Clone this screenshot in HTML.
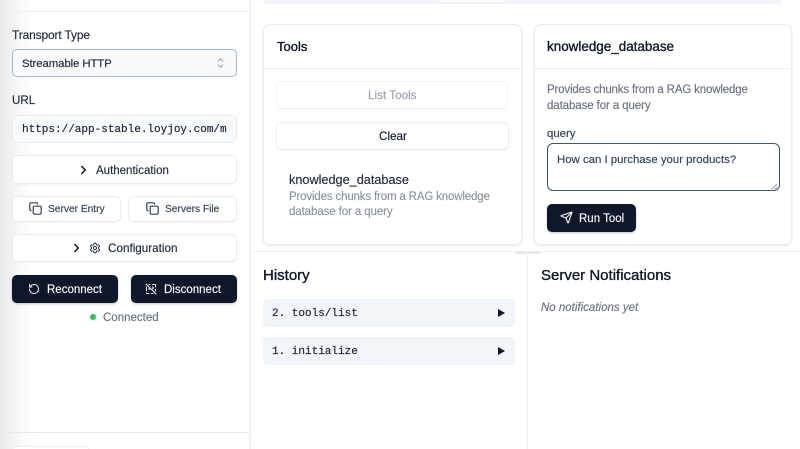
<!DOCTYPE html>
<html><head><meta charset="utf-8"><style>
*{box-sizing:border-box}
html,body{margin:0;padding:0;width:800px;height:449px;overflow:hidden;background:#fff}
body{font-family:"Liberation Sans",sans-serif;color:#0f172a;position:relative}
#w{position:absolute;left:0;top:0;width:800px;height:449px;filter:blur(.35px)}
.a{position:absolute;white-space:nowrap}
.t{position:absolute;white-space:nowrap;line-height:16px;font-size:12px;margin-top:1px;-webkit-text-stroke:.15px currentColor}
.b{position:absolute;border:1px solid #e8ecf3;border-radius:5px;background:#fff;box-shadow:0 1px 1px rgba(15,23,42,.03)}
.d{position:absolute;background:#0f172a;border-radius:5px;box-shadow:0 1px 2px rgba(15,23,42,.25)}
.m{font-family:"Liberation Mono",monospace;font-size:11px;-webkit-text-stroke:.2px currentColor}
svg{position:absolute;fill:none;stroke:currentColor;stroke-width:2;stroke-linecap:round;stroke-linejoin:round}
.card{position:absolute;background:#fff;border:1px solid #e8ecf3;border-radius:7px;box-shadow:0 1px 2px rgba(15,23,42,.1)}
</style></head><body><div id="w">
<div class="a" style="left:0;top:0;width:34px;height:449px;background:linear-gradient(90deg,#e8e8e8,#f7f7f7 50%,#fff)"></div>
<div class="a" style="left:249px;top:0;width:1.5px;height:449px;background:#eef1f6"></div>
<div class="a" style="left:0;top:11px;width:249px;height:1px;background:#eef1f6"></div>
<div class="a" style="left:0;top:432px;width:249px;height:1px;background:#e6ebf2"></div>
<div class="b" style="left:12px;top:446px;width:78px;height:10px"></div>

<div class="t" style="left:12px;top:26px;font-size:12px;letter-spacing:-.15px;color:#1e293b">Transport Type</div>
<div class="a" style="left:12px;top:49px;width:225px;height:28px;border:1.5px solid #a5b0f8;border-radius:5px;background:#f8fafc"></div>
<div class="t" style="left:22px;top:55px;font-size:11.4px;color:#1e293b;letter-spacing:-.1px">Streamable HTTP</div>
<svg style="left:216px;top:57px;color:#a0a7b3;stroke-width:1.1" width="9" height="12" viewBox="0 0 9 12"><path d="M2.2 4l2.3-2.3L6.8 4M2.2 8l2.3 2.3L6.8 8"/></svg>

<div class="t" style="left:12px;top:92px;font-size:11.6px;color:#1e293b">URL</div>
<div class="a" style="left:12px;top:115px;width:225px;height:28px;border:1px solid #e8ecf3;border-radius:5px;background:#f8fafc"></div>
<div class="t m" style="left:22px;top:121px;color:#1e293b">https://app-stable.loyjoy.com/m</div>

<div class="b" style="left:12px;top:155px;width:225px;height:29px"></div>
<svg style="left:79px;top:165px;color:#0f172a;stroke-width:1.5" width="9" height="10" viewBox="0 0 9 10"><path d="M2.8 1.5l3.5 3.5-3.5 3.5"/></svg>
<div class="t" style="left:96px;top:162px;font-size:11.5px;color:#1e293b">Authentication</div>

<div class="b" style="left:12px;top:196px;width:108.500px;height:25.500px"></div>
<svg style="left:29px;top:202px;color:#334155;stroke-width:1.2" width="13" height="13" viewBox="0 0 13 13"><rect x="4.2" y="4.2" width="8" height="8" rx="1.2"/><path d="M2 8.6C1.3 8.6.8 8 .8 7.400V2C.8 1.300 1.300.8 2 .8h5.400c.6 0 1.200.5 1.200 1.200"/></svg>
<div class="t" style="left:48px;top:201px;font-size:10.2px;color:#334155">Server Entry</div>
<div class="b" style="left:127.500px;top:196px;width:109.500px;height:25.500px"></div>
<svg style="left:146px;top:202px;color:#334155;stroke-width:1.2" width="13" height="13" viewBox="0 0 13 13"><rect x="4.2" y="4.2" width="8" height="8" rx="1.2"/><path d="M2 8.6C1.3 8.6.8 8 .8 7.400V2C.8 1.300 1.300.8 2 .8h5.400c.6 0 1.200.5 1.200 1.200"/></svg>
<div class="t" style="left:165px;top:201px;font-size:10.2px;color:#334155">Servers File</div>

<div class="b" style="left:12px;top:234px;width:225px;height:28px"></div>
<svg style="left:72px;top:243px;color:#0f172a;stroke-width:1.5" width="9" height="10" viewBox="0 0 9 10"><path d="M2.8 1.5l3.5 3.5-3.5 3.5"/></svg>
<svg style="left:89px;top:242px;color:#1e293b;stroke-width:1.8" width="12" height="12" viewBox="0 0 24 24"><path d="M12.220 2h-.44a2 2 0 0 0-2 2v.18a2 2 0 0 1-1 1.730l-.43.25a2 2 0 0 1-2 0l-.15-.08a2 2 0 0 0-2.730.73l-.22.38a2 2 0 0 0 .73 2.730l.15.1a2 2 0 0 1 1 1.720v.51a2 2 0 0 1-1 1.740l-.15.09a2 2 0 0 0-.73 2.730l.22.38a2 2 0 0 0 2.730.73l.15-.08a2 2 0 0 1 2 0l.43.25a2 2 0 0 1 1 1.730V20a2 2 0 0 0 2 2h.44a2 2 0 0 0 2-2v-.18a2 2 0 0 1 1-1.730l.43-.25a2 2 0 0 1 2 0l.15.08a2 2 0 0 0 2.730-.73l.22-.39a2 2 0 0 0-.73-2.730l-.15-.08a2 2 0 0 1-1-1.740v-.5a2 2 0 0 1 1-1.740l.15-.09a2 2 0 0 0 .73-2.730l-.22-.38a2 2 0 0 0-2.730-.73l-.15.08a2 2 0 0 1-2 0l-.43-.25a2 2 0 0 1-1-1.730V4a2 2 0 0 0-2-2z"/><circle cx="12" cy="12" r="3"/></svg>
<div class="t" style="left:108px;top:240px;font-size:11.7px;color:#1e293b">Configuration</div>

<div class="d" style="left:12px;top:275px;width:106px;height:28px"></div>
<svg style="left:28px;top:282.500px;color:#f8fafc;stroke-width:2" width="12" height="12" viewBox="0 0 24 24"><path d="M3 12a9 9 0 1 0 9-9 9.750 9.750 0 0 0-6.740 2.740L3 8"/><path d="M3 3v5h5"/></svg>
<div class="t" style="left:47px;top:281px;font-size:11.5px;color:#f8fafc">Reconnect</div>
<div class="d" style="left:130.500px;top:275px;width:106.500px;height:28px"></div>
<svg style="left:145px;top:282.500px;color:#f8fafc;stroke-width:2" width="12" height="12" viewBox="0 0 24 24"><path d="M2 2l20 20M8 3h2M15 3h5a1 1 0 0 1 1 1v4M21 13v3M3 8v8M3 20v0a1 1 0 0 0 1 1h4M13 21h3M7 12h3M15 8l2 2-2 2"/></svg>
<div class="t" style="left:164px;top:281px;font-size:11.5px;color:#f8fafc">Disconnect</div>

<div class="a" style="left:90px;top:314px;width:6px;height:6px;border-radius:50%;background:#22c55e"></div>
<div class="t" style="left:103px;top:309px;font-size:11.5px;color:#6b7280">Connected</div>

<div class="a" style="left:263px;top:0;width:519px;height:4px;background:#f1f5f9;border-radius:0 0 4px 4px"></div>
<div class="a" style="left:440px;top:0;width:64px;height:1.500px;background:#fff;border-radius:0 0 2px 2px"></div>

<div class="card" style="left:263px;top:24px;width:258.500px;height:221px"></div>
<div class="a" style="left:264px;top:68px;width:256px;height:1px;background:#eceff5"></div>
<div class="t" style="left:277px;top:38px;font-size:13px;color:#0f172a;-webkit-text-stroke:.35px #0f172a">Tools</div>
<div class="b" style="left:276px;top:81px;width:232px;height:28px;border-color:#f1f3f7;box-shadow:none"></div>
<div class="t" style="left:368px;top:87px;font-size:11.7px;color:#9ca3af">List Tools</div>
<div class="b" style="left:276px;top:122px;width:232.500px;height:28px"></div>
<div class="t" style="left:379px;top:128px;font-size:11.7px;color:#0f172a">Clear</div>
<div class="t" style="left:289px;top:171px;font-size:12.7px;color:#1e293b">knowledge_database</div>
<div class="t" style="left:289px;top:188px;font-size:11.5px;color:#8b93a1;letter-spacing:-.16px">Provides chunks from a RAG knowledge</div>
<div class="t" style="left:289px;top:203px;font-size:11.5px;color:#8b93a1;letter-spacing:-.1px">database for a query</div>

<div class="card" style="left:534px;top:24px;width:258px;height:221px"></div>
<div class="a" style="left:535px;top:68px;width:256px;height:1px;background:#eceff5"></div>
<div class="t" style="left:547px;top:38px;font-size:13.45px;color:#0f172a;-webkit-text-stroke:.35px #0f172a">knowledge_database</div>
<div class="t" style="left:547px;top:81px;font-size:11.5px;color:#6b7280;letter-spacing:-.16px">Provides chunks from a RAG knowledge</div>
<div class="t" style="left:547px;top:97px;font-size:11.5px;color:#6b7280;letter-spacing:-.1px">database for a query</div>
<div class="t" style="left:547px;top:125px;font-size:11.4px;color:#334155">query</div>
<div class="a" style="left:546.500px;top:143px;width:233px;height:48px;border:1.500px solid #475569;border-radius:6px;background:#fff"></div>
<div class="t" style="left:557px;top:151px;font-size:11.4px;color:#334155">How can I purchase your products?</div>
<svg style="left:771px;top:183px;color:#94a3b8;stroke-width:1" width="7" height="7" viewBox="0 0 7 7"><path d="M1 6l5-5M4 6l2-2"/></svg>
<div class="d" style="left:547px;top:204px;width:89px;height:28px"></div>
<svg style="left:559.500px;top:211px;color:#f8fafc;stroke-width:2" width="13" height="13" viewBox="0 0 24 24"><path d="M14.536 21.686a.5.5 0 0 0 .937-.024l6.500-19a.496.496 0 0 0-.635-.635l-19 6.500a.5.5 0 0 0-.024.937l7.930 3.180a2 2 0 0 1 1.112 1.110z"/><path d="M21.854 2.147 10.914 13.086"/></svg>
<div class="t" style="left:579px;top:210px;font-size:11.5px;color:#f8fafc">Run Tool</div>

<div class="a" style="left:250px;top:251px;width:550px;height:1px;background:#eef1f6"></div>
<div class="a" style="left:515px;top:251px;width:25px;height:2.500px;background:#e5eaf1;border-radius:1px"></div>
<div class="a" style="left:527px;top:252px;width:1px;height:197px;background:#eef1f6"></div>

<div class="t" style="left:263px;top:267px;font-size:15px;color:#0f172a;-webkit-text-stroke:.35px #0f172a">History</div>
<div class="a" style="left:263px;top:299px;width:251.500px;height:28px;background:#f1f5f9;border-radius:4px"></div>
<div class="t m" style="left:272px;top:305px;color:#1e293b">2. tools/list</div>
<div class="a" style="left:497.500px;top:309px;width:0;height:0;border-left:7.500px solid #0f172a;border-top:4px solid transparent;border-bottom:4px solid transparent"></div>
<div class="a" style="left:263px;top:337px;width:251.500px;height:28px;background:#f1f5f9;border-radius:4px"></div>
<div class="t m" style="left:272px;top:343px;color:#1e293b">1. initialize</div>
<div class="a" style="left:497.500px;top:347px;width:0;height:0;border-left:7.500px solid #0f172a;border-top:4px solid transparent;border-bottom:4px solid transparent"></div>

<div class="t" style="left:541px;top:267px;font-size:15px;color:#0f172a;-webkit-text-stroke:.35px #0f172a">Server Notifications</div>
<div class="t" style="left:541px;top:299px;font-size:11.5px;font-style:italic;color:#6b7280">No notifications yet</div>
</div></body></html>
